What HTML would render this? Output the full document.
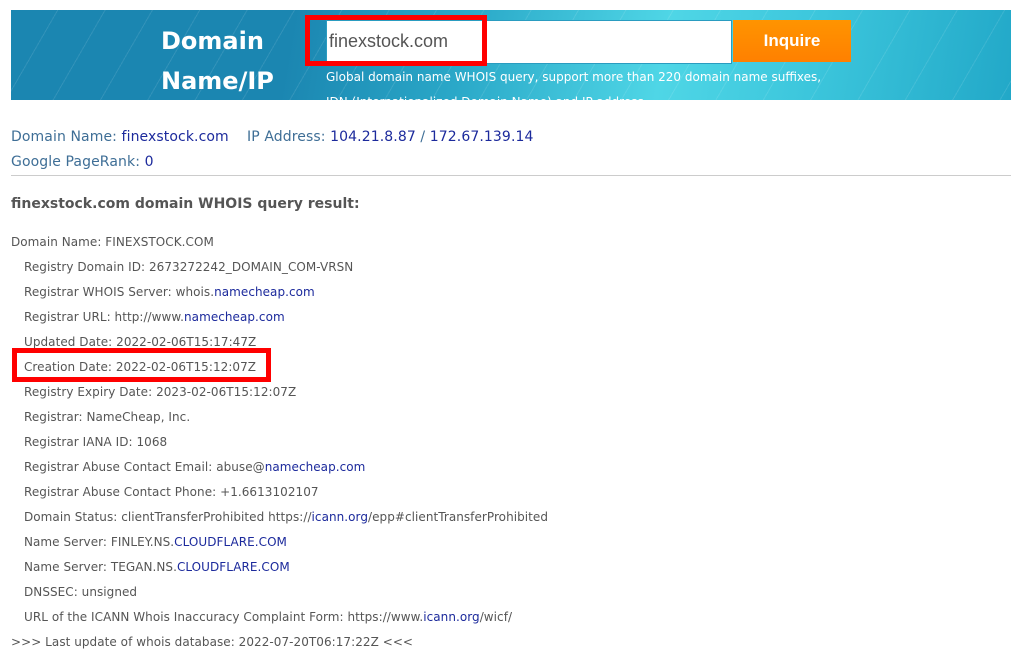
<!DOCTYPE html>
<html><head><meta charset="utf-8"><style>
body{margin:0;background:#fff;font-family:"DejaVu Sans","Liberation Sans",sans-serif;color:#555;}
.ban{position:absolute;left:11px;top:10px;width:1000px;height:90px;overflow:hidden;
background:linear-gradient(100deg,#1b86b1 0%,#1b86b1 28%,#2aa8c8 45%,#4fd6e6 65%,#3cc6dc 80%,#22a8c8 100%);}
.ban:after{content:"";position:absolute;inset:0;background:repeating-linear-gradient(120deg,rgba(255,255,255,0) 0 40px,rgba(255,255,255,.10) 40px 41px);}
.t{position:absolute;color:#fff;font-weight:bold;font-size:24px;left:150px;}
.inp{position:absolute;left:315px;top:10px;width:404px;height:42px;background:#fff;border:1px solid #2a9cc0;z-index:2}
.inp span{position:absolute;left:2px;top:10px;font-family:"Liberation Sans",sans-serif;font-size:18px;color:#555}
.btn{position:absolute;left:722px;top:10px;width:118px;height:42px;background:linear-gradient(#ff9400,#ff8000);color:#fff;font-weight:bold;font-size:17px;text-align:center;line-height:42px;z-index:2;font-family:"Liberation Sans",sans-serif}
.desc{position:absolute;left:315px;top:55px;color:#fff;font-size:12px;line-height:25px;z-index:2;white-space:nowrap}
.red{position:absolute;border:5px solid #f00;z-index:3}
.l{position:absolute;left:11px;font-size:14px;color:#3e6e96;white-space:nowrap;letter-spacing:0.1px}
.l a{color:#1c2a9c}
.r{position:absolute;font-size:12px;white-space:nowrap;color:#555;letter-spacing:0.05px}
.r a{color:#1c2a9c}
</style></head><body>
<div class="ban">
<div class="t" style="top:17px">Domain</div>
<div class="t" style="top:57px">Name/IP</div>
<div class="inp"><span>finexstock.com</span></div>
<div class="btn">Inquire</div>
<div class="desc">Global domain name WHOIS query, support more than 220 domain name suffixes,<br>IDN (Internationalized Domain Name) and IP address</div>
</div>
<div class="red" style="left:305px;top:15px;width:172px;height:41px"></div>
<div class="l" style="top:129px">Domain Name: <a>finexstock.com</a>&nbsp;&nbsp;&nbsp;&nbsp;IP Address: <a>104.21.8.87</a> / <a>172.67.139.14</a></div>
<div class="l" style="top:154px">Google PageRank: <a>0</a></div>
<div style="position:absolute;left:11px;top:175px;width:1000px;height:1px;background:#ccc"></div>
<div class="r" style="left:11px;top:196px;font-size:14px;font-weight:bold;letter-spacing:0">finexstock.com domain WHOIS query result:</div>
<div class="r" style="left:11px;top:235px">Domain Name: FINEXSTOCK.COM</div>
<div class="r" style="left:24px;top:260px">Registry Domain ID: 2673272242_DOMAIN_COM-VRSN</div>
<div class="r" style="left:24px;top:285px">Registrar WHOIS Server: whois.<a>namecheap.com</a></div>
<div class="r" style="left:24px;top:310px">Registrar URL: http://www.<a>namecheap.com</a></div>
<div class="r" style="left:24px;top:335px">Updated Date: 2022-02-06T15:17:47Z</div>
<div class="r" style="left:24px;top:360px">Creation Date: 2022-02-06T15:12:07Z</div>
<div class="r" style="left:24px;top:385px">Registry Expiry Date: 2023-02-06T15:12:07Z</div>
<div class="r" style="left:24px;top:410px">Registrar: NameCheap, Inc.</div>
<div class="r" style="left:24px;top:435px">Registrar IANA ID: 1068</div>
<div class="r" style="left:24px;top:460px">Registrar Abuse Contact Email: abuse@<a>namecheap.com</a></div>
<div class="r" style="left:24px;top:485px">Registrar Abuse Contact Phone: +1.6613102107</div>
<div class="r" style="left:24px;top:510px">Domain Status: clientTransferProhibited https://<a>icann.org</a>/epp#clientTransferProhibited</div>
<div class="r" style="left:24px;top:535px">Name Server: FINLEY.NS.<a>CLOUDFLARE.COM</a></div>
<div class="r" style="left:24px;top:560px">Name Server: TEGAN.NS.<a>CLOUDFLARE.COM</a></div>
<div class="r" style="left:24px;top:585px">DNSSEC: unsigned</div>
<div class="r" style="left:24px;top:610px">URL of the ICANN Whois Inaccuracy Complaint Form: https://www.<a>icann.org</a>/wicf/</div>
<div class="r" style="left:11px;top:635px">&gt;&gt;&gt; Last update of whois database: 2022-07-20T06:17:22Z &lt;&lt;&lt;</div>
<div class="red" style="left:12px;top:348px;width:249px;height:24px"></div>
</body></html>
